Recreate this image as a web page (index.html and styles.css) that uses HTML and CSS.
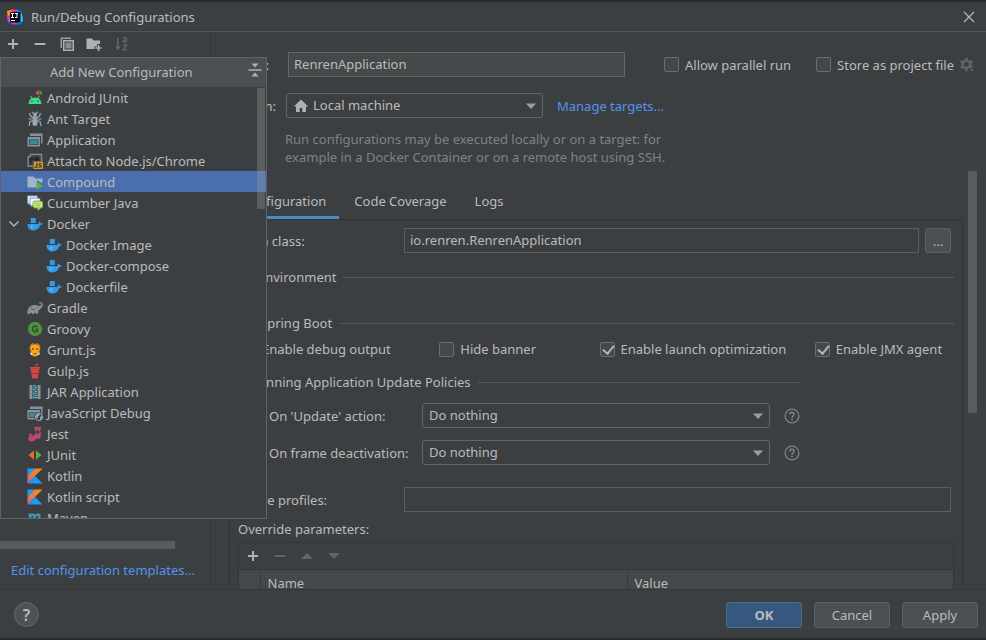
FILE: index.html
```html
<!DOCTYPE html>
<html lang="en">
<head>
<meta charset="utf-8">
<title>Run/Debug Configurations</title>
<link rel="stylesheet" href="styles.css">
</head>
<body>
<svg class="defs" width="0" height="0" aria-hidden="true">
  <defs>
    <linearGradient id="kt" x1="0" y1="1" x2="1" y2="0"><stop offset="0" stop-color="#c757bc"/><stop offset=".35" stop-color="#e07a5f"/><stop offset="1" stop-color="#ff8a00"/></linearGradient>
    <linearGradient id="kb" x1="0" y1="1" x2="1" y2="0"><stop offset="0" stop-color="#1c93f0"/><stop offset="1" stop-color="#18a8f8"/></linearGradient>
    <symbol id="docker" viewBox="0 0 16 16"><path fill="#2f9bea" d="M3.800 2h5v5h-5z"/><path fill="#2f9bea" d="M.5 8h11.300c-.3-1.100-.1-2.200.5-2.800.8.600 1.200 1.200 1.300 2 .8-.1 1.600 0 2.200.4-.5 1.200-1.400 1.700-2.700 1.700C12.200 12.600 10 14.500 6.500 14.500 2.700 14.500.5 12 .5 8z"/><circle cx="5.300" cy="10.800" r="1.300" fill="#8fd0ff"/><circle cx="5.500" cy="10.700" r=".6" fill="#2f6fa8"/></symbol>
    <symbol id="kotlin" viewBox="0 0 16 16"><path fill="url(#kb)" d="M.5.5H8L.5 8zM.5 15.500L8 8l7.500 7.500z"/><path fill="url(#kt)" d="M8 .5h7.500L.5 15.500V8z"/></symbol>
    <symbol id="window" viewBox="0 0 16 16"><path fill="#87939a" d="M3 1.500h12.500v10H14V4H3z"/><path fill="#87939a" fill-rule="evenodd" d="M.5 5h12.500v9.500H.5zM2 7.500V13h9.500V7.500z"/><path fill="#3a8ba6" d="M2.700 8.200h8.100v4.200H2.700z"/></symbol>
    <symbol id="plus" viewBox="0 0 16 16"><path fill="currentColor" d="M7 3h2v4h4v2H9v4H7V9H3V7h4z"/></symbol>
    <symbol id="minus" viewBox="0 0 16 16"><path fill="currentColor" d="M2.500 7h11v2h-11z"/></symbol>
    <symbol id="caret" viewBox="0 0 16 16"><path fill="currentColor" d="M3 5.500h10L8 11z"/></symbol>
    <symbol id="help" viewBox="0 0 16 16"><circle cx="8" cy="8" r="6.900" fill="none" stroke="#7f8487" stroke-width="1.300"/><path fill="none" stroke="#7f8487" stroke-width="1.500" d="M5.900 6.600C5.900 3.600 10.100 3.700 10.100 6.300 10.100 7.900 8 7.800 8 9.700"/><path fill="#7f8487" d="M7.200 10.700h1.600v1.500H7.200z"/></symbol>
  </defs>
</svg>
<div class="window">
  <header class="titlebar">
    <svg class="logo" viewBox="0 0 18 18" aria-hidden="true"><path fill="#fe315d" d="M1 4l5-3 5 1-2 7-6 3-2-3z"/><path fill="#ff9a20" d="M1 3l4-1 1 4-4 2z"/><path fill="#087cfa" d="M10 1l5 2 2 6-2 7-4 1-3-5z"/><path fill="#b74af7" d="M1 10l5-2 4 6-1 3-7-3z"/><path fill="#20c9f5" d="M13 4l3 2 1 7-3 2z"/><path fill="#0b0711" d="M4 4h10.500v10.500H4z"/><path stroke="#fff" fill="none" d="M5 5.500h3M6.500 5.500v4M5 9.500h3M9 5.500h3M11 5.500v4H9M5 12.500h4"/></svg>
    <h1>Run/Debug Configurations</h1>
    <button class="icon-button close" aria-label="Close"><svg viewBox="0 0 12 12"><path d="M1 1l10 10M11 1L1 11" stroke="#b4b6b8" stroke-width="1.300"/></svg></button>
  </header>

  <main class="body">
    <aside class="sidebar">
      <div class="toolbar">
        <button class="icon-button" aria-label="Add"><svg viewBox="0 0 16 16"><use href="#plus"/></svg></button>
        <button class="icon-button" aria-label="Remove"><svg viewBox="0 0 16 16"><use href="#minus"/></svg></button>
        <button class="icon-button" aria-label="Copy"><svg viewBox="0 0 16 16"><path fill="#9da0a2" d="M1.500 1.500h10.500V3H3v9H1.500z"/><path fill="#afb1b3" fill-rule="evenodd" d="M4 4h11v11H4zm1.500 1.500v8h8v-8z"/><path fill="#8a8d8f" d="M6.500 6.500h6v6h-6z"/></svg></button>
        <button class="icon-button" aria-label="New folder"><svg viewBox="0 0 16 16"><path fill="#afb1b3" d="M.5 2.500h5.500l1.500 2h6.500V8h-3v2.500H8.500V13h-8z"/><path fill="#afb1b3" d="M11.700 9h1.600v2.200h2.200v1.600h-2.200V15h-1.600v-2.200H9.500v-1.600h2.200z"/></svg></button>
        <button class="icon-button" aria-label="Sort" disabled><svg viewBox="0 0 16 16"><path fill="#66696b" d="M4 2h1.500v8.500h2.300L4.800 14 1.700 10.500H4z"/><path fill="none" stroke="#66696b" stroke-width="1.200" d="M10 2.200c.8-1 3.500-.8 3.500.8v3M13.500 3.800c-2 0-3.500.3-3.500 1.400 0 1.500 2.800 1.300 3.500 0M10 9.200h3.700l-3.500 4.600h3.800"/></svg></button>
      </div>
      <div class="hscroll"></div>
      <a class="link templates" href="#">Edit configuration templates...</a>
    </aside>

    <section class="editor">
      <div class="general">
        <div class="row name-row">
          <label class="head-label" for="name">Name:</label>
          <input class="field name" id="name" type="text" value="RenrenApplication">
          <label class="check parallel"><input type="checkbox">Allow parallel run</label>
          <label class="check store"><input type="checkbox">Store as project file</label>
          <svg class="gear" viewBox="0 0 16 16" aria-hidden="true"><g fill="none" stroke="#606366"><circle cx="7.500" cy="7.500" r="3.700" stroke-width="2.600"/><path stroke-width="2.800" d="M7.500.8v2M7.500 12.200v2M1.700 4.200l1.800 1M11.500 9.800l1.800 1M1.700 10.800l1.800-1M11.500 5.200l1.800-1"/></g><path fill="#606366" stroke="#3c3f41" d="M10 11.500h6L13 15z"/></svg>
        </div>
        <div class="row target-row">
          <label class="head-label" for="target">Run on:</label>
          <div class="select target">
            <svg class="home" viewBox="0 0 16 16" aria-hidden="true"><path fill="#afb1b3" d="M8 1.500L.8 8.500H3V14h3.700v-4h2.600v4H13V8.500h2.200z"/></svg>
            <select id="target"><option>Local machine</option></select>
            <svg class="arrow" viewBox="0 0 16 16" aria-hidden="true"><use href="#caret"/></svg>
          </div>
          <a class="link" href="#">Manage targets...</a>
        </div>
        <p class="note">Run configurations may be executed locally or on a target: for example in a Docker Container or on a remote host using SSH.</p>
      </div>

      <div class="scrollpane">
        <div class="tabbed">
          <div class="tabs" role="tablist">
            <button class="tab active" role="tab" aria-selected="true">Configuration</button>
            <button class="tab" role="tab">Code Coverage</button>
            <button class="tab" role="tab">Logs</button>
          </div>
          <div class="panel">
            <div class="row form-row">
              <label class="form-label" for="mainclass">Main class:</label>
              <input class="field flat grow mainclass" id="mainclass" type="text" value="io.renren.RenrenApplication">
              <button class="browse" aria-label="Browse">...</button>
            </div>
            <h2 class="group env"><span>Environment</span></h2>
            <h2 class="group boot"><span>Spring Boot</span></h2>
            <div class="checks">
              <label class="check"><input type="checkbox">Enable debug output</label>
              <label class="check"><input type="checkbox">Hide banner</label>
              <label class="check"><input type="checkbox" checked>Enable launch optimization</label>
              <label class="check"><input type="checkbox" checked>Enable JMX agent</label>
            </div>
            <div class="policies">
              <h2 class="group policy-title">Running Application Update Policies</h2>
              <div class="row policy">
                <label for="update">On 'Update' action:</label>
                <div class="select"><select id="update"><option>Do nothing</option></select><svg class="arrow" viewBox="0 0 16 16" aria-hidden="true"><use href="#caret"/></svg></div>
                <svg class="helpicon" viewBox="0 0 16 16" aria-hidden="true"><use href="#help"/></svg>
              </div>
              <div class="row policy">
                <label for="frame">On frame deactivation:</label>
                <div class="select"><select id="frame"><option>Do nothing</option></select><svg class="arrow" viewBox="0 0 16 16" aria-hidden="true"><use href="#caret"/></svg></div>
                <svg class="helpicon" viewBox="0 0 16 16" aria-hidden="true"><use href="#help"/></svg>
              </div>
            </div>
            <div class="row form-row profiles">
              <label class="form-label" for="profiles">Active profiles:</label>
              <input class="field flat grow" id="profiles" type="text">
            </div>
            <div class="override-label">Override parameters:</div>
            <div class="params">
              <div class="params-bar">
                <button class="icon-button" aria-label="Add parameter"><svg viewBox="0 0 16 16"><use href="#plus"/></svg></button>
                <button class="icon-button" aria-label="Remove parameter" disabled><svg viewBox="0 0 16 16"><use href="#minus"/></svg></button>
                <button class="icon-button" aria-label="Move up" disabled><svg viewBox="0 0 16 16"><path fill="currentColor" d="M2 11h12L8 5z"/></svg></button>
                <button class="icon-button" aria-label="Move down" disabled><svg viewBox="0 0 16 16"><path fill="currentColor" d="M2 5h12L8 11z"/></svg></button>
              </div>
              <table>
                <thead><tr><th class="tick"></th><th class="pname">Name</th><th>Value</th></tr></thead>
              </table>
            </div>
          </div>
        </div>
        <div class="vscroll"><div class="vthumb"></div></div>
      </div>
    </section>

    <div class="popup">
      <div class="popup-head">
        <span>Add New Configuration</span>
        <button class="icon-button collapse" aria-label="Collapse all"><svg viewBox="0 0 16 16"><path fill="#afb1b3" d="M1.500 7.200h13v1.600h-13zM4.500 1.500h7L8 5.500zM4.500 14.500h7L8 10.500z"/></svg></button>
      </div>
      <div class="popup-body">
        <ul class="list" role="listbox" aria-label="Add New Configuration">
          <li role="option"><svg viewBox="0 0 16 16"><path fill="#3ddc84" d="M1.500 14c.2-3 1.500-4.800 3-5.700L3.300 6.200l.8-.4 1.300 2.100c1.700-.7 3.700-.7 5.300 0L12 5.800l.8.400-1.300 2.100c1.700 1 2.800 2.900 3 5.700z"/><circle cx="5" cy="11" r=".8" fill="#3c3f41"/><circle cx="11" cy="11" r=".8" fill="#3c3f41"/><path fill="#f26522" d="M11.500 0v5.500L8.500 2.700z"/><path fill="#499c54" d="M12.500 0v5.500L15.500 2.700z"/></svg>Android JUnit</li>
          <li role="option"><svg viewBox="0 0 16 16"><g fill="#9aa7b0"><circle cx="8" cy="3.500" r="2"/><ellipse cx="8" cy="7" rx="2.400" ry="2"/><ellipse cx="8" cy="11.500" rx="2.600" ry="3.500"/></g><path fill="none" stroke="#9aa7b0" stroke-width="1.200" d="M6.500 2.500L5 .8M9.500 2.500L11 .8M6 6.500L3.500 5 2.500 2M10 6.500L12.500 5l1-3M6 8H1.500M10 8h4.500M6 9.500L3 10.500 2 15M10 9.500l3 1 1 4.500"/></svg>Ant Target</li>
          <li role="option"><svg viewBox="0 0 16 16"><use href="#window"/></svg>Application</li>
          <li role="option"><svg viewBox="0 0 16 16"><path fill="none" stroke="#7f898f" stroke-width="1.400" d="M3.500 3V1.500H14.500V8M3.500 3.700H1.200v9.500H6"/><path fill="none" stroke="#202426" stroke-width="1.500" d="M3.500 10.500V6H10"/><path fill="#202426" d="M8.500 2.500L12.500 6l-4 3.500z"/><path fill="#c99a3d" d="M6.500 8.500H16V16H6.500z"/><path fill="none" stroke="#45371c" stroke-width="1.200" d="M10 10v3.500c0 1.200-2 1.200-2 0M14.500 10.700c-2.300-.7-3 .9-1.300 1.500 2 .7 1 2.500-1.500 1.700"/></svg>Attach to Node.js/Chrome</li>
          <li role="option" class="selected" aria-selected="true"><svg viewBox="0 0 16 16"><path fill="#a5b3ca" d="M.5 2.500h6l1.500 2h7.500V8l-1 1-4.500-3v7.500H.5z"/><path fill="#59b43c" d="M9.500 7.500L16 11.700 9.500 16z"/></svg>Compound</li>
          <li role="option"><svg viewBox="0 0 16 16"><path fill="#dbe9fa" stroke="#5f88c6" stroke-width=".6" d="M.4.8h10v7.500H3L1.500 10V8.300H.4z"/><path fill="#f3f8ff" stroke="#5f88c6" stroke-width=".7" d="M3 3.300h10v7H6L4.500 12.200v-1.900H3z"/><rect x="6" y="6.200" width="9.800" height="6.800" rx="2" fill="#d2ec8c" stroke="#75a936"/><path fill="#d2ec8c" stroke="#75a936" stroke-width=".8" d="M11 13v2.500l2.500-2.500"/><path stroke="#75a936" stroke-width=".7" d="M8 8.700h6M8 10.700h5"/></svg>Cucumber Java</li>
          <li role="option" class="parent"><svg class="chevron" viewBox="0 0 16 16"><path fill="none" stroke="#afb1b3" stroke-width="1.500" d="M3.500 5.500L8 10l4.500-4.500"/></svg><svg viewBox="0 0 16 16"><use href="#docker"/></svg>Docker</li>
          <li role="option" class="child"><svg viewBox="0 0 16 16"><use href="#docker"/></svg>Docker Image</li>
          <li role="option" class="child"><svg viewBox="0 0 16 16"><use href="#docker"/></svg>Docker-compose</li>
          <li role="option" class="child"><svg viewBox="0 0 16 16"><use href="#docker"/></svg>Dockerfile</li>
          <li role="option"><svg viewBox="0 0 16 16"><path fill="#87939a" d="M.5 14c-.3-4.500 1.300-7.500 4.500-8.500 2-.6 4.500-.8 6.500.3 1.200.6 2.500.2 2.700-1.300.1-1-.9-1.600-1.900-1.100l-.5-1c2-1 3.900.2 3.900 2.300 0 2.300-1.500 3.200-2.500 4.100-.8 1.700-1.700 1.700-2 2.200V14H9.300c-.2-1.800-2-1.800-2.300 0H5.100c-.2-1.800-2-1.800-2.300 0z"/><path fill="none" stroke="#3c3f41" stroke-width=".7" d="M4 7.500c.5 2 2.500 2.700 4 1.700"/><circle cx="10.700" cy="7.800" r=".5" fill="#3c3f41"/></svg>Gradle</li>
          <li role="option"><svg viewBox="0 0 16 16"><circle cx="8" cy="8" r="7.200" fill="#4f8f40"/><path fill="none" stroke="#25461f" stroke-width="1.200" d="M10.300 6C8.500 4.300 5.500 5.300 5.500 8s3 3.600 4.900 2.200V8.300H8.300"/></svg>Groovy</li>
          <li role="option"><svg viewBox="0 0 16 16"><path fill="#b87624" d="M3.500 2.500L6 1l2 1 2-1 2.500 1.500 1 3-1 6L10 14l-2 1-2-1-2.500-2.500-1-6z"/><path fill="#f9a61c" d="M4 3.500l4-1 4 1 .8 3L11 10l-1 3-2 1.500L6 13l-1-3-1.800-3.500z"/><path fill="#593817" d="M4.800 6l2.200.7v1L5 7.300zM11.200 6L9 6.700v1l2-.4zM6.700 11h2.600L8 12.500z"/><path fill="#ece0ca" d="M3 10.500l2 .5 1 2.500-2-.5zM13 10.500l-2 .5-1 2.500 2-.5z"/></svg>Grunt.js</li>
          <li role="option"><svg viewBox="0 0 16 16"><path fill="#db4446" d="M3 4h5l.6-2.500L11 .5l.4.9-1.900.8L9 4h4v1.700H3zM3.600 6h8.800l-.7 4.400H4.300zM4.500 10.900h7l-.8 4.600H5.300z"/></svg>Gulp.js</li>
          <li role="option"><svg viewBox="0 0 16 16"><path fill="#87939a" d="M2.500 1h3v14h-3zM10.500 1h3v14h-3z"/><path fill="#47666f" d="M5.500 1h5v14h-5z"/><path stroke="#48b3cf" stroke-width="1" d="M6 1.500h2.500M7.500 3.500H10M6 5.500h2.500M7.500 7.500H10M6 9.500h2.500M7.500 11.500H10M6 13.500h4"/></svg>JAR Application</li>
          <li role="option"><svg viewBox="0 0 16 16"><use href="#window"/><circle cx="12" cy="12" r="4.600" fill="#3c3f41"/><circle cx="12" cy="12" r="3.600" fill="#3c3f41" stroke="#a0abb2"/><path fill="#a0abb2" d="M9 10l3-1.500.5 2-1.500 1v1.500l-1.500.5zM13 12l2-1-.5 3-1.500 1z"/></svg>JavaScript Debug</li>
          <li role="option"><svg viewBox="0 0 16 16"><path fill="#b84a6b" d="M7 1h7.500l-1.500 4.500h-1L10.700 3 9.500 5.500h-1zM2 7.500h2.500v2.300L8 9l.5-2.500H10V8h1.500V6.500H14v3.200l-.7.8.2 2-4.500.5-2 1.700c-2 1-4.500 1-5.500-.4-1-1.500-.3-2.800.8-3.300z"/></svg>Jest</li>
          <li role="option"><svg viewBox="0 0 16 16"><path fill="#f26522" d="M7 3.500v9.200L1.500 8z"/><path fill="#5bae43" d="M9 3.500v9.200L14.500 8z"/></svg>JUnit</li>
          <li role="option"><svg viewBox="0 0 16 16"><use href="#kotlin"/></svg>Kotlin</li>
          <li role="option"><svg viewBox="0 0 16 16"><use href="#kotlin"/></svg>Kotlin script</li>
          <li role="option"><svg viewBox="0 0 16 16"><path fill="none" stroke="#3f93b3" stroke-width="2.200" d="M1.500 4.500h2L2 13M3.300 7c1-2.500 4.500-3.500 4-1L6.300 13M7.700 7c1.200-2.500 5.500-3.800 4.800-1l-1 5c-.2 1.500 1 1.500 2.500.5"/></svg>Maven</li>
        </ul>
        <div class="popup-thumb"></div>
      </div>
    </div>
  </main>

  <footer class="footer">
    <button class="help-button" aria-label="Help">?</button>
    <button class="button primary">OK</button>
    <button class="button">Cancel</button>
    <button class="button">Apply</button>
  </footer>
</div>
</body>
</html>
```
FILE: styles.css
```css
* { box-sizing: border-box; }

body {
  margin: 0;
  background: #2b2b2b;
  color: #bbbbbb;
  font: 13px/18px "Noto Sans", "Open Sans", sans-serif;
}

button, input, select { font: inherit; color: inherit; }
h1, h2, p, ul { margin: 0; padding: 0; font: inherit; }
svg { display: block; flex: none; }
.defs { position: absolute; }

.window {
  display: flex;
  flex-direction: column;
  height: 100vh;
  border: solid #2b2b2b;
  border-width: 2px 0;
}

.titlebar {
  display: flex;
  align-items: center;
  flex: none;
  height: 30px;
  padding: 0 11px 0 6px;
  gap: 7px;
  background: #3c3f41;
  border-bottom: 1px solid #515355;
}
.logo { width: 18px; height: 18px; }

.icon-button {
  display: block;
  flex: none;
  width: 16px;
  height: 16px;
  padding: 0;
  border: 0;
  background: none;
  color: #afb1b3;
}
.icon-button:disabled { color: #616466; }
.icon-button svg { width: 100%; height: 100%; }
.close { width: 12px; height: 12px; margin-left: auto; }

.body {
  position: relative;
  display: flex;
  flex: 1;
  min-height: 0;
  overflow: hidden;
  background: #3c3f41;
}

.sidebar {
  display: flex;
  flex-direction: column;
  flex: none;
  width: 211px;
  border-right: 1px solid #353739;
}
.toolbar { display: flex; gap: 11px; padding: 4px 5px; }
.hscroll { width: 175px; height: 8px; margin-top: auto; background: #595b5d; }
.link { color: #5394ec; text-decoration: none; }
.templates { margin: 12px 0 10px 11px; white-space: nowrap; }

.editor { display: flex; flex-direction: column; flex: 1; min-width: 0; }
.row { display: flex; align-items: center; }
.general { flex: none; height: 139px; padding: 20px 11px 0 18px; }
.head-label { width: 57px; }
.target-row { margin-top: 16px; }

.field {
  height: 25px;
  min-width: 0;
  padding: 0 5px 2px;
  border: 1px solid #646667;
  background: #45494a;
  outline: 0;
}
.flat { background: transparent; border-color: #5c5e60; }
.grow { flex: 1; }
.name { flex: 0 1 337px; margin-left: 2px; }

.check { display: flex; align-items: center; gap: 6px; white-space: nowrap; }
.check input {
  appearance: none;
  display: grid;
  flex: none;
  width: 15px;
  height: 15px;
  margin: 0;
  border: 1px solid #6b6d6f;
  border-radius: 2px;
  background: #43494a;
}
.check input:checked::before {
  content: "";
  width: 5px;
  height: 9px;
  margin-left: 4px;
  border: solid #b4b6b7;
  border-width: 0 2px 2px 0;
  transform: rotate(40deg);
}
.parallel { margin-left: auto; }
.store { margin-left: 25px; }
.gear { width: 16px; height: 16px; margin-left: 5px; }

.select { position: relative; min-width: 0; }
.select select {
  appearance: none;
  display: block;
  width: 100%;
  height: 25px;
  padding: 0 24px 1px 6px;
  border: 1px solid #646667;
  border-radius: 3px;
  background: transparent;
  outline: 0;
}
.arrow { position: absolute; top: 5px; right: 4px; width: 16px; height: 16px; color: #9b9da0; pointer-events: none; }
.home { position: absolute; top: 5px; left: 7px; width: 16px; height: 16px; }
.target { flex: 0 1 257px; margin-right: 14px; }
.target select { padding-left: 26px; }
.note { width: 400px; margin: 12px 0 0 56px; color: #808284; }

.scrollpane { display: flex; flex: 1; min-height: 0; padding-left: 18px; }
.tabbed { display: flex; flex-direction: column; flex: 1; min-width: 0; padding-top: 15px; }
.tabs { display: flex; flex: none; gap: 2px; height: 33px; }
.tab { padding: 0 13px; border: 0; border-bottom: 3px solid transparent; background: none; }
.active { border-bottom-color: #4a88c7; }
.panel {
  flex: 1;
  min-height: 0;
  overflow: hidden;
  padding: 8px 8px 0;
  border: 1px solid #323537;
  border-bottom: 0;
}
.form-row { padding-right: 3px; }
.form-label { flex: none; width: 166px; }
.browse {
  width: 26px;
  height: 25px;
  margin-left: 6px;
  padding: 0;
  border: 1px solid #5e6162;
  border-radius: 3px;
  background: #4c5052;
}
.group { display: flex; align-items: center; gap: 7px; height: 18px; white-space: nowrap; }
.group::after { content: ""; flex: 1; height: 1px; background: #555759; }
.env { margin-top: 15px; padding-left: 20px; }
.boot { margin-top: 28px; padding-left: 22px; }
.checks { display: grid; grid-template-columns: 198fr 160fr 215fr 139fr; margin-top: 8px; padding-left: 3px; }
.policies { width: 78.5%; padding-left: 3px; margin-top: 15px; }
.policy-title { padding-left: 9px; }
.policy { padding-left: 28px; margin-top: 12px; }
.policy label { flex: none; width: 153px; }
.policy .select { flex: 1; }
.helpicon { width: 16px; height: 16px; margin-left: 14px; }
.profiles { margin-top: 22px; }
.override-label { margin-top: 8px; }
.params { margin-top: 4px; border: 1px solid #333638; border-bottom: 0; }
.params-bar { display: flex; gap: 11px; height: 27px; padding: 5px 6px; border-bottom: 1px solid #333638; }
table { width: 100%; border-collapse: collapse; table-layout: fixed; background: #45484a; }
th { height: 26px; padding: 0 7px; border-right: 1px solid #37393b; font-weight: normal; text-align: left; }
th:last-child { border-right: 0; }
.tick { width: 21px; padding: 0; }
.pname { width: 367px; }

.vscroll { flex: none; width: 23px; padding-left: 5px; }
.vthumb { width: 9px; height: 58%; background: #595b5d; }

.popup {
  position: absolute;
  top: 25px;
  left: 0;
  display: flex;
  flex-direction: column;
  width: 267px;
  height: 462px;
  border: 1px solid #616365;
  background: #3c3f41;
}
.popup-head {
  display: flex;
  align-items: center;
  flex: none;
  height: 29px;
  padding: 0 3px 1px 49px;
  background: #4b4e52;
}
.collapse { margin-left: auto; margin-bottom: 4px; }
.popup-body { position: relative; flex: 1; min-height: 0; overflow: hidden; }
.list { list-style: none; }
.list li { display: flex; align-items: center; gap: 4px; height: 21px; padding-left: 26px; white-space: nowrap; }
.list li svg { width: 16px; height: 16px; }
.list .selected { background: #4b6eaf; }
.list .parent { padding-left: 5px; }
.list .parent .chevron { margin-right: 1px; }
.list .child { padding-left: 45px; }
.popup-thumb { position: absolute; top: 1px; right: 1px; width: 8px; height: 121px; background: #a6a6a64d; }

.footer {
  display: flex;
  align-items: center;
  flex: none;
  height: 49px;
  padding: 1px 8px 0 14px;
  gap: 12px;
  background: #3c3f41;
  border-top: 1px solid #353739;
}
.help-button {
  width: 25px;
  height: 25px;
  margin-right: auto;
  padding: 0;
  border: 1px solid #65686a;
  border-radius: 50%;
  background: #4e5254;
  font-size: 16px;
  font-weight: 600;
}
.button {
  width: 76px;
  height: 26px;
  padding: 0;
  border: 1px solid #5e6162;
  border-radius: 3px;
  background: #4c5052;
}
.primary { border-color: #4c708c; background: #365880; font-weight: 700; }
```
